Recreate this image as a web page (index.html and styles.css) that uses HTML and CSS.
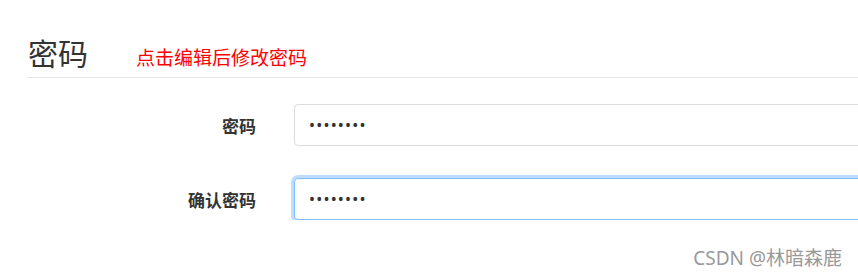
FILE: index.html
```html
<!DOCTYPE html>
<html lang="zh-CN">
<head>
  <meta charset="UTF-8" />
  <title>密码</title>
  <link rel="stylesheet" href="styles.css">
</head>
<body>

  <!-- Password section -->
  <fieldset class="pwd-box">
    <div class="legend">
      <span class="legend-title">密码</span>
      <span class="legend-tip">点击编辑后修改密码</span>
    </div>

    <div class="form-row">
      <label class="form-label" for="pwd">密码</label>
      <input class="form-input" id="pwd" type="password" value="12345678" />
    </div>

    <div class="form-row">
      <label class="form-label" for="pwd2">确认密码</label>
      <input class="form-input focus" id="pwd2" type="password" value="12345678" />
    </div>
  </fieldset>

  <div class="watermark">CSDN @林暗森鹿</div>

</body>
</html>
```

FILE: styles.css
```css
* {
  margin: 0;
  padding: 0;
  box-sizing: border-box;
  font-family: "Noto Sans", "Noto Sans CJK SC", sans-serif;
}

body {
  background: #fff;
  color: #212529;
  overflow: hidden;
  width: 858px;
  height: 279px;
  position: relative;
}

.pwd-box {
  border: none;
  padding: 34px 0 0 28px;
  overflow: hidden;
}

/* Legend */
.legend {
  display: flex;
  align-items: baseline;
  border-bottom: 1px solid #e5e5e5;
  height: 44px;
}

.legend-title {
  font-size: 30px;
  font-weight: 400;
  line-height: 40px;
  color: #333;
}

.legend-tip {
  margin-left: 48px;
  font-size: 19px;
  color: #f00;
}

/* Rows */
.form-row {
  display: flex;
  align-items: center;
  margin-top: 26px;
}

.form-row + .form-row {
  margin-top: 32px;
}

.form-label {
  width: 228px;
  text-align: right;
  font-size: 17px;
  font-weight: bold;
  color: #333;
}

.form-input {
  margin-left: 38px;
  width: 640px;
  flex-shrink: 0;
  height: 42px;
  padding: 8px 14px;
  font-size: 16px;
  color: #333;
  border: 1px solid #dcdcdc;
  border-radius: 4px;
  outline: none;
  letter-spacing: 1.2px;
}

.form-input.focus {
  border-color: #80bdff;
  box-shadow: 0 0 0 3px rgba(0, 123, 255, 0.25);
}

.watermark {
  position: absolute;
  right: 16px;
  bottom: 8px;
  font-size: 19px;
  color: #999;
}
```
